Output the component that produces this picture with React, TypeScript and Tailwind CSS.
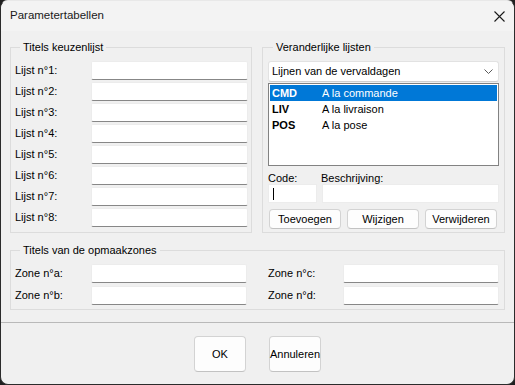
import React from "react";

const lijsten = ["1", "2", "3", "4", "5", "6", "7", "8"];

const items = [
  { code: "CMD", label: "A la commande", selected: true },
  { code: "LIV", label: "A la livraison", selected: false },
  { code: "POS", label: "A la pose", selected: false },
];

function TextBox({ className = "" }: { className?: string }) {
  return (
    <div
      className={`h-[19px] bg-white border border-[#ececec] border-b-[#878787] rounded-[2px] ${className}`}
    />
  );
}

function GroupBox({
  title,
  className = "",
  children,
}: {
  title: string;
  className?: string;
  children: React.ReactNode;
}) {
  return (
    <fieldset className={`min-w-0 border border-[#dcdcdc] ${className}`}>
      <legend className="ml-[5px] px-[3px] text-[11px] leading-[16px]">{title}</legend>
      {children}
    </fieldset>
  );
}

function PushButton({ label, className = "" }: { label: string; className?: string }) {
  return (
    <button
      className={`flex items-center justify-center whitespace-nowrap bg-[#fdfdfd] border border-[#d3d3d3] border-b-[#c2c2c2] rounded-[4px] text-[11px] text-black ${className}`}
    >
      {label}
    </button>
  );
}

export default function App() {
  return (
    <div
      className="w-[515px] h-[385px] bg-[#1f1f1f] text-black"
      style={{ fontFamily: '"Liberation Sans", Arial, sans-serif' }}
    >
      <div className="w-full h-full flex flex-col rounded-[8px] overflow-hidden border-x border-b border-t border-[#2b2b2b] border-t-[#e8e8e8] bg-[#f0f0f0]">
        {/* title bar */}
        <div className="h-[30px] shrink-0 flex items-center justify-between bg-[#f3f3f3] pl-[9px] pr-[9px]">
          <span className="text-[11.5px] text-[#1a1a1a]">Parametertabellen</span>
          <svg width="11" height="11" viewBox="0 0 11 11" className="mr-[0px]">
            <path d="M0.5 0.5 L10.5 10.5 M10.5 0.5 L0.5 10.5" stroke="#1a1a1a" strokeWidth="1.1" />
          </svg>
        </div>

        {/* body */}
        <div className="px-[9px] pt-[8px]">
          <div className="flex gap-[10px]">
            {/* left group */}
            <GroupBox title="Titels keuzenlijst" className="w-[242px] h-[194px] pl-[4px] pt-[6px]">
              <div className="flex flex-col gap-[2px]">
                {lijsten.map((n) => (
                  <div key={n} className="flex items-center h-[19px]">
                    <span className="w-[76px] text-[11px]">Lijst n°{n}:</span>
                    <TextBox className="w-[157px]" />
                  </div>
                ))}
              </div>
            </GroupBox>

            {/* right group */}
            <GroupBox title="Veranderlijke lijsten" className="w-[243px] h-[194px] pl-[5px] pt-[6px]">
              <div className="w-[231px] h-[21px] flex items-center justify-between bg-white border border-[#e2e2e2] border-b-[#cfcfcf] rounded-[3px] pl-[3px] pr-[5px]">
                <span className="text-[11px]">Lijnen van de vervaldagen</span>
                <svg width="9" height="5" viewBox="0 0 9 5">
                  <path d="M0.5 0.5 L4.5 4.5 L8.5 0.5" fill="none" stroke="#5a5a5a" strokeWidth="1" />
                </svg>
              </div>
              <div className="mt-[1px] w-[231px] h-[83px] bg-white border border-[#828282] p-[1px]">
                {items.map((it) => (
                  <div
                    key={it.code}
                    className={`h-[16px] flex items-center pl-[2px] text-[11px] ${
                      it.selected ? "bg-[#0078d7] text-white" : "text-black"
                    }`}
                  >
                    <span className="w-[50px] font-bold">{it.code}</span>
                    <span>{it.label}</span>
                  </div>
                ))}
              </div>
              <div className="mt-[6px] flex h-[12px] leading-[12px] text-[11px]">
                <span className="w-[53px]">Code:</span>
                <span>Beschrijving:</span>
              </div>
              <div className="flex gap-[5px]">
                <div className="w-[49px] h-[19px] bg-white border border-[#ececec] flex items-center pl-[4px]">
                  <span className="w-[1px] h-[12px] bg-black" />
                </div>
                <div className="w-[177px] h-[19px] bg-white border border-[#ececec]" />
              </div>
              <div className="mt-[6px] ml-[1px] flex gap-[6px]">
                <PushButton label="Toevoegen" className="w-[72px] h-[20px]" />
                <PushButton label="Wijzigen" className="w-[72px] h-[20px]" />
                <PushButton label="Verwijderen" className="w-[72px] h-[20px]" />
              </div>
            </GroupBox>
          </div>

          {/* bottom group */}
          <GroupBox title="Titels van de opmaakzones" className="mt-[9px] w-[495px] h-[68px] pl-[4px] pt-[6px]">
            <div className="flex">
              <div className="w-[232px] flex flex-col gap-[3px]">
                {["a", "b"].map((z) => (
                  <div key={z} className="flex items-center h-[19px]">
                    <span className="w-[76px] text-[11px]">Zone n°{z}:</span>
                    <TextBox className="w-[157px]" />
                  </div>
                ))}
              </div>
              <div className="ml-[21px] flex flex-col gap-[3px]">
                {["c", "d"].map((z) => (
                  <div key={z} className="flex items-center h-[19px]">
                    <span className="w-[75px] text-[11px]">Zone n°{z}:</span>
                    <TextBox className="w-[156px]" />
                  </div>
                ))}
              </div>
            </div>
          </GroupBox>
        </div>

        {/* footer */}
        <div className="mt-[12px] h-[1px] bg-[#b9b9b9]" />
        <div className="flex justify-center gap-[23px] pt-[13px]">
          <PushButton label="OK" className="w-[52px] h-[36px] border-[#0067c0] border-b-[#0067c0]" />
          <PushButton label="Annuleren" className="w-[52px] h-[36px]" />
        </div>
      </div>
    </div>
  );
}
